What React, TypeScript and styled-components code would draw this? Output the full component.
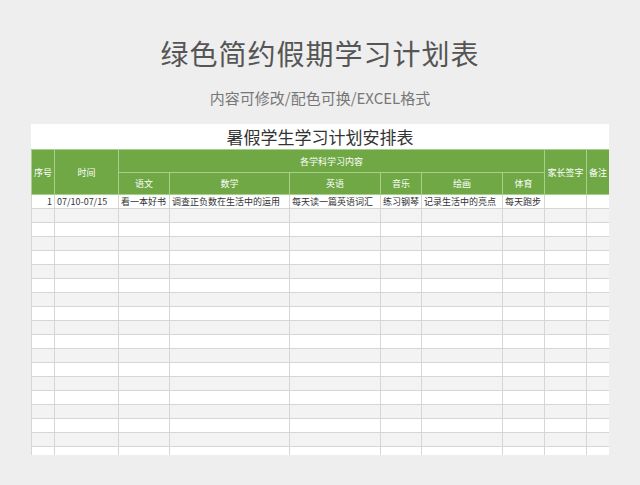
import React from "react";
import styled, { createGlobalStyle } from "styled-components";

const G = createGlobalStyle`
  html,body{margin:0;padding:0;background:#eeeeee;font-family:"Noto Sans CJK SC","Noto Sans",sans-serif;}
`;
const Page = styled.div`width:640px;height:485px;overflow:hidden;display:flex;flex-direction:column;align-items:center;`;
const H1 = styled.div`margin-top:33px;height:40px;line-height:40px;font-size:28px;font-weight:400;color:#555;letter-spacing:1px;`;
const Sub = styled.div`margin-top:14px;height:22px;line-height:22px;font-size:15px;color:#777;`;
const Card = styled.div`margin-top:15px;width:578px;height:331px;overflow:hidden;background:#fff;`;
const Title = styled.div`height:25px;line-height:25px;text-align:center;font-size:17px;color:#333;overflow:visible;`;
const Table = styled.table`border-collapse:collapse;table-layout:fixed;width:578px;font-size:9px;`;
const Th = styled.th<{ $h?: number }>`background:#6fa844;color:#fff;font-weight:400;border:1px solid #a9cf8c;padding:0;height:${p=>p.$h||21}px;white-space:nowrap;`;
const Tr = styled.tr<{ $alt: boolean }>`background:${p=>p.$alt?"#f3f3f3":"#fff"};`;
const Td = styled.td<{ $r?: boolean }>`height:13px;line-height:13px;padding:0 2px;border:1px solid #d6d6d6;color:#333;white-space:nowrap;overflow:hidden;text-align:${p=>p.$r?"right":"left"};`;

const widths=[23,64,51,120,91,41,81,42,42,23];
const first=["1","07/10-07/15","看一本好书","调查正负数在生活中的运用","每天读一篇英语词汇","练习钢琴","记录生活中的亮点","每天跑步","",""];

export default function App(){
  return <Page><G/>
    <H1>绿色简约假期学习计划表</H1>
    <Sub>内容可修改/配色可换/EXCEL格式</Sub>
    <Card>
      <Title>暑假学生学习计划安排表</Title>
      <Table>
        <colgroup>{widths.map((w,i)=><col key={i} style={{width:w}}/>)}</colgroup>
        <thead>
          <tr><Th rowSpan={2}>序号</Th><Th rowSpan={2}>时间</Th><Th colSpan={6} $h={22}>各学科学习内容</Th><Th rowSpan={2}>家长签字</Th><Th rowSpan={2}>备注</Th></tr>
          <tr>{["语文","数学","英语","音乐","绘画","体育"].map(t=><Th key={t} $h={21}>{t}</Th>)}</tr>
        </thead>
        <tbody>
          {Array.from({length:20}).map((_,r)=><Tr key={r} $alt={r%2===1}>
            {widths.map((_,c)=><Td key={c} $r={c===0}>{r===0?first[c]:""}</Td>)}
          </Tr>)}
        </tbody>
      </Table>
    </Card>
  </Page>;
}
